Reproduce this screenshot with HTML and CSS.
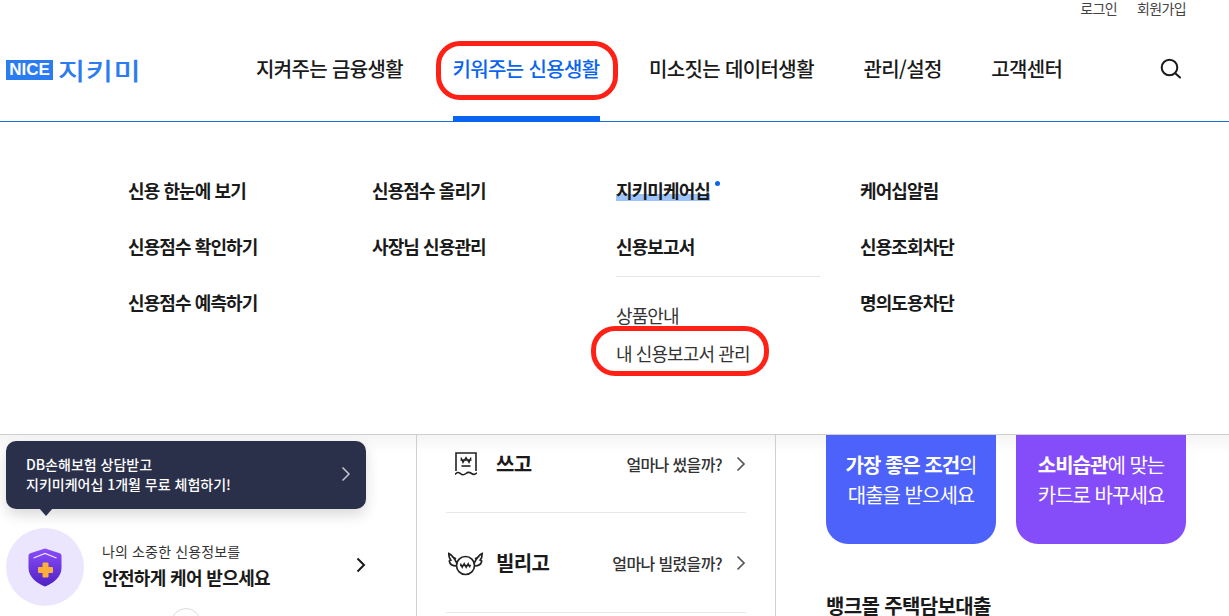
FILE: index.html
```html
<!DOCTYPE html>
<html lang="ko">
<head>
    <title>NICE 지키미</title>
    <meta charset="UTF-8">
    <link rel="stylesheet" href="styles.css">
</head>
<body>
    <header class="header">
        <div class="util">
            <a>로그인</a>
            <a>회원가입</a>
        </div>
        <div class="gnb">
            <div class="logo"><span class="logo-nice">NICE</span><span class="logo-name">지키미</span></div>
            <nav class="nav">
                <a>지켜주는 금융생활</a>
                <a class="active">키워주는 신용생활</a>
                <a>미소짓는 데이터생활</a>
                <a>관리/설정</a>
                <a>고객센터</a>
            </nav>
            <svg class="search" width="22" height="22" viewBox="0 0 22 22" fill="none" stroke="#1a1a1a" stroke-width="2" stroke-linecap="round">
                <circle cx="9.500" cy="9.500" r="7.800"/>
                <path d="M15.500 15.500l4.500 4"/>
            </svg>
        </div>
    </header>

    <section class="panel">
        <ul class="menu-col">
            <li>신용 한눈에 보기</li>
            <li>신용점수 확인하기</li>
            <li>신용점수 예측하기</li>
        </ul>
        <ul class="menu-col">
            <li>신용점수 올리기</li>
            <li>사장님 신용관리</li>
        </ul>
        <div class="menu-col menu-wide">
            <ul>
                <li><span class="mark">지키미케어십</span><i class="dot"></i></li>
                <li>신용보고서</li>
            </ul>
            <div class="sub">
                <a>상품안내</a>
                <a>내 신용보고서 관리</a>
            </div>
        </div>
        <ul class="menu-col">
            <li>케어십알림</li>
            <li>신용조회차단</li>
            <li>명의도용차단</li>
        </ul>
    </section>

    <main class="content">
        <div class="col-left">
            <div class="care">
                <div class="care-icon">
                    <svg width="34" height="39" viewBox="0 0 34 39">
                        <defs>
                            <linearGradient id="shield" x1="0" y1="0" x2="0" y2="1">
                                <stop offset="0" stop-color="#8a4dfb"/>
                                <stop offset="1" stop-color="#4f21c4"/>
                            </linearGradient>
                        </defs>
                        <path d="M17 .5L31 5C33 5.700 33.500 6.500 33.500 8.500V20C33.500 29 25 35.500 17 38.500C9 35.500 .5 29 .5 20V8.500C.5 6.500 1 5.700 3 5z" fill="url(#shield)"/>
                        <path d="M5.500 10L17 5.500 28.500 10" fill="none" stroke="#efe6ff" stroke-width="1.200"/>
                        <path d="M15 15h5v4.500h4.500v5H20V29h-5v-4.500h-4.500v-5H15z" fill="#fbb03b" stroke="#fbb03b" stroke-linejoin="round"/>
                    </svg>
                </div>
                <div class="care-text">
                    <p>나의 소중한 신용정보를</p>
                    <strong>안전하게 케어 받으세요</strong>
                </div>
                <svg class="care-arrow" width="10" height="16" viewBox="0 0 10 16" fill="none" stroke="#1a1a1a" stroke-width="2">
                    <path d="M1.500 1.500L8 8l-6.500 6.500"/>
                </svg>
            </div>
            <div class="round"></div>
        </div>

        <div class="col-mid">
            <div class="row">
                <span class="row-icon">
                    <svg width="22" height="24" viewBox="0 0 22 24" fill="none" stroke="#222" stroke-width="1.600">
                        <path d="M1 19V1h20v18"/>
                        <path d="M0 22.500c2-2.500 3.500-2.500 5.500-.8s3.500 1.500 5.500-.2 3.500-1.500 5.500 0 3.500 1.500 5.500-.8"/>
                        <path d="M6 5.500l2 5 3-5 3 5 2-5M5.500 8h11" stroke-width="1.300"/>
                        <path d="M6.500 14h9"/>
                    </svg>
                </span>
                <b>쓰고</b>
                <span class="row-q">얼마나 썼을까?</span>
                <svg class="row-arrow" width="10" height="16" viewBox="0 0 10 16" fill="none" stroke="#555" stroke-width="1.700"><path d="M1.500 1.500L8 8l-6.500 6.500"/></svg>
            </div>
            <div class="row">
                <span class="row-icon">
                    <svg width="36" height="26" viewBox="0 0 36 26" fill="none" stroke="#222" stroke-width="1.700">
                        <circle cx="17.500" cy="15.500" r="9"/>
                        <path d="M12.500 13.500l1.700 4 2-4 2 4 2-4 1.700 4M12 15.500h11" stroke-width="1.300"/>
                        <path d="M8.500 12.500C6 7.500 4 5 .8 3.500c0 3 .5 5 2 6.500-1 .3-1.500.5-1.500 1 .5 3 3 5 7 5M4 6.500l4 2.500"/>
                        <path d="M26.500 12.500C29 7.500 31 5 34.200 3.500c0 3-.5 5-2 6.500 1 .3 1.500.5 1.500 1-.5 3-3 5-7 5M31 6.500L27 9"/>
                    </svg>
                </span>
                <b>빌리고</b>
                <span class="row-q">얼마나 빌렸을까?</span>
                <svg class="row-arrow" width="10" height="16" viewBox="0 0 10 16" fill="none" stroke="#555" stroke-width="1.700"><path d="M1.500 1.500L8 8l-6.500 6.500"/></svg>
            </div>
        </div>

        <div class="col-right">
            <div class="cards">
                <div class="card card-blue"><b>가장 좋은 조건</b>의<br>대출을 받으세요</div>
                <div class="card card-purple"><b>소비습관</b>에 맞는<br>카드로 바꾸세요</div>
            </div>
            <h3 class="loan">뱅크몰 주택담보대출</h3>
        </div>
    </main>

    <a class="tooltip">
        <span>DB손해보험 상담받고<br>지키미케어십 1개월 무료 체험하기!</span>
        <svg width="10" height="16" viewBox="0 0 10 16" fill="none" stroke="#c3c6d0" stroke-width="1.500"><path d="M1.500 1.500L8 8l-6.500 6.500"/></svg>
    </a>

    <div class="ring ring-nav"></div>
    <div class="ring ring-report"></div>
</body>
</html>
```

FILE: styles.css
```css
* {
    box-sizing: border-box;
}
html, body {
    height: 616px;
    margin: 0;
    overflow: hidden;
}
body {
    position: relative;
    font-family: "Noto Sans CJK KR", "Noto Sans", sans-serif;
    color: #1a1a1a;
    background-color: white;
    letter-spacing: -0.04em;
}
ul {
    list-style: none;
    margin: 0;
    padding: 0;
}

/* header */
.header {
    height: 122px;
    border-bottom: 1px solid #1f6fd8;
}
.util {
    display: flex;
    justify-content: flex-end;
    gap: 20px;
    height: 16px;
    padding-right: 43px;
    font-size: 14px;
    line-height: 16px;
    color: #444;
}
.gnb {
    display: flex;
    align-items: flex-start;
    height: 105px;
}
.logo {
    display: flex;
    align-items: center;
    gap: 5px;
    width: 256px;
    height: 107px;
    padding-left: 6px;
}
.logo-nice {
    width: 47px;
    height: 20px;
    font-family: "Liberation Sans", sans-serif;
    font-size: 17px;
    font-weight: 700;
    line-height: 20px;
    text-align: center;
    letter-spacing: 0;
    color: white;
    background-color: #2b7cf0;
}
.logo-name {
    font-size: 24px;
    font-weight: 500;
    line-height: 20px;
    letter-spacing: 0.5px;
    color: #2b7cf0;
    transform: scaleX(1.23);
    transform-origin: left center;
}
.nav {
    display: flex;
    gap: 49.500px;
}
.nav a {
    display: block;
    height: 106px;
    padding-top: 38px;
    font-size: 20px;
    font-weight: 500;
    line-height: 30px;
}
.nav .active {
    color: #0a64f0;
    border-bottom: 6px solid #0a64f0;
}
.search {
    margin: 42px 0 0 98px;
}

/* menu panel */
.panel {
    display: flex;
    height: 313px;
    padding: 52px 0 0 128px;
    border-bottom: 1px solid #d0d0d0;
}
.menu-col {
    width: 244px;
}
.menu-col li {
    height: 56px;
    font-size: 18px;
    font-weight: 700;
    line-height: 32px;
    letter-spacing: -0.05em;
}
.menu-wide ul li:last-child {
    height: 46px;
}
.mark {
    display: inline-block;
    background: linear-gradient(transparent 62%, #9cc4fa 62%, #9cc4fa 84%, transparent 84%);
}
.dot {
    display: inline-block;
    width: 5px;
    height: 5px;
    margin: 7px 0 0 5px;
    vertical-align: top;
    border-radius: 50%;
    background-color: #0a64f0;
}
.sub {
    width: 204px;
    padding-top: 22px;
    border-top: 1px solid #e6e6e6;
}
.sub a {
    display: block;
    height: 38px;
    font-size: 18px;
    line-height: 32px;
    letter-spacing: -0.05em;
    color: #333;
}

/* content below the panel */
.content {
    display: grid;
    grid-template-columns: 417px 359px 1fr;
    height: 181px;
    background: linear-gradient(#f4f4f4, white 18px);
}
.col-left {
    position: relative;
    padding: 93px 0 0 6px;
    border-right: 1px solid #d0d0d0;
}
.care {
    display: flex;
    align-items: center;
}
.care-icon {
    display: flex;
    align-items: center;
    justify-content: center;
    width: 78px;
    height: 78px;
    margin-right: 18px;
    border-radius: 50%;
    background-color: #ebe6fd;
}
.care-text {
    width: 170px;
    padding-bottom: 4px;
}
.care-text p {
    margin: 0;
    font-size: 14px;
    line-height: 20px;
    letter-spacing: 0.01em;
    color: #333;
}
.care-text strong {
    display: block;
    margin-top: 3px;
    font-size: 18px;
    line-height: 26px;
}
.care-arrow {
    margin: 0 0 4px 84px;
}
.round {
    position: absolute;
    left: 171px;
    top: 173px;
    width: 30px;
    height: 30px;
    border: 1px solid #dcdcdc;
    border-radius: 50%;
    background-color: white;
}
.col-mid {
    padding: 0 29px;
    border-right: 1px solid #d0d0d0;
}
.row {
    display: flex;
    align-items: center;
    height: 100px;
    border-bottom: 1px solid #e8e8e8;
}
.row:first-child {
    height: 78px;
    padding-bottom: 20px;
}
.row-icon {
    display: flex;
    justify-content: center;
    flex: none;
    width: 40px;
    margin-right: 10px;
}
.row b {
    font-size: 20px;
    font-weight: 700;
}
.row-q {
    margin-left: auto;
    font-size: 16px;
    font-weight: 500;
    color: #333;
}
.row-arrow {
    margin-left: 14px;
}
.col-right {
    padding-left: 50px;
}
.cards {
    display: flex;
    gap: 20px;
}
.card {
    width: 170px;
    height: 109px;
    padding-top: 15px;
    border-radius: 0 0 22px 22px;
    font-size: 20px;
    line-height: 30px;
    letter-spacing: -0.05em;
    text-align: center;
    color: white;
}
.card-blue {
    background-color: #4d62fb;
}
.card-purple {
    background-color: #854cf9;
}
.loan {
    margin: 48px 0 0;
    font-size: 20px;
    font-weight: 700;
    line-height: 28px;
}

/* layers on top */
.tooltip {
    position: absolute;
    left: 6px;
    top: 441px;
    display: flex;
    align-items: center;
    justify-content: space-between;
    width: 360px;
    height: 68px;
    padding: 0 15px 3px 20px;
    border-radius: 10px;
    background-color: #2b304a;
    box-shadow: 0 6px 14px rgba(0,0,0,0.15);
    font-size: 14px;
    font-weight: 500;
    line-height: 20px;
    letter-spacing: 0;
    color: white;
}
.tooltip::after {
    content: "";
    position: absolute;
    left: 33px;
    bottom: -7px;
    width: 0;
    height: 0;
    border-left: 7px solid transparent;
    border-right: 7px solid transparent;
    border-top: 8px solid #2b304a;
}
.ring {
    position: absolute;
    border: 5px solid #ff2016;
    border-radius: 24px;
}
.ring-nav {
    left: 436px;
    top: 41px;
    width: 182px;
    height: 59px;
}
.ring-report {
    left: 591px;
    top: 326px;
    width: 178px;
    height: 50px;
}
```
